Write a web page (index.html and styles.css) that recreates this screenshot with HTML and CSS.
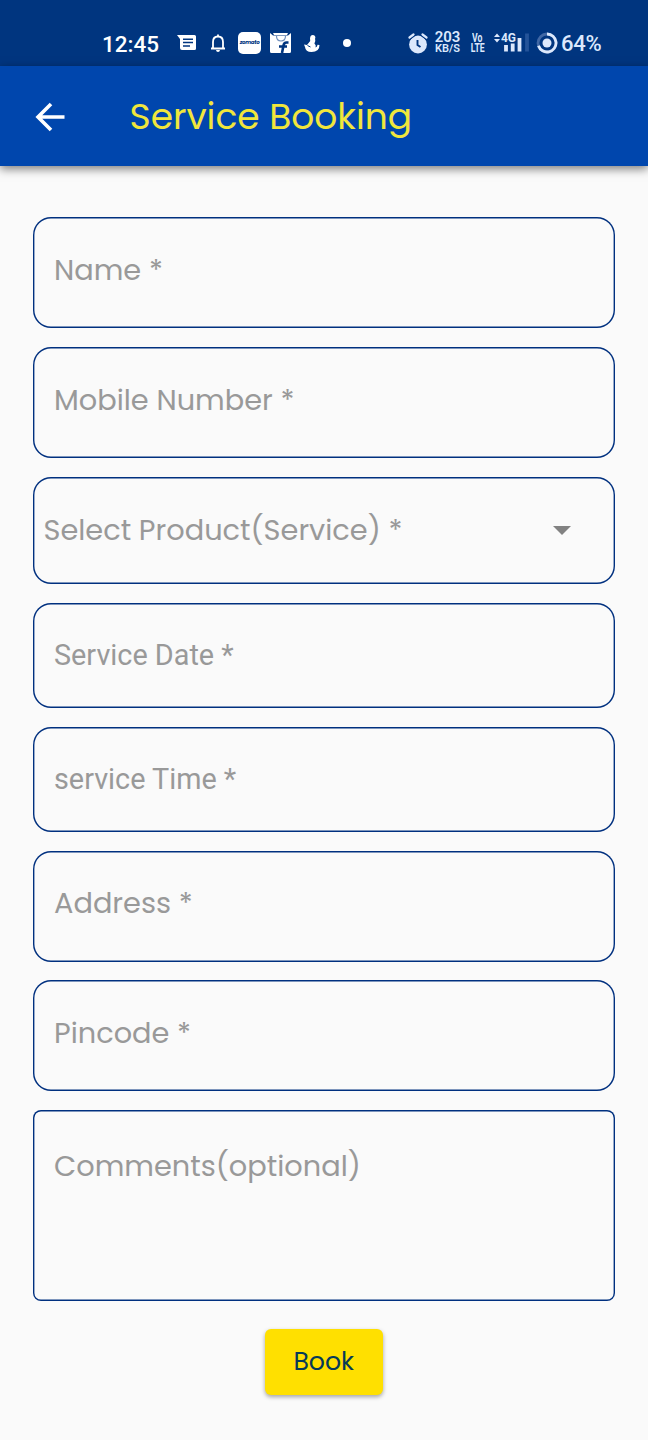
FILE: index.html
```html
<!DOCTYPE html>
<html lang="en">
<head>
    <meta charset="UTF-8">
    <meta name="viewport" content="width=device-width, initial-scale=1.0">
    <title>Service Booking</title>
    <link rel="stylesheet" href="styles.css">
</head>
<body>
    <div class="status-bar">
        <span class="time">12:45</span>
        <svg class="icon-message" width="19" height="18" viewBox="0 0 19 18">
            <path d="M0 1h17.500q1.500 0 1.500 1.500v12q0 1.500-1.500 1.500H5q-2 0-2-2V5z" fill="#fff"/>
            <path d="M6 5.200h10M6 8.600h10M6 12h7" stroke="#00357f" stroke-width="1.500"/>
        </svg>
        <svg class="icon-bell" width="16" height="20" viewBox="0 0 16 20">
            <path d="M1 15.500h14M3 15V9q0-5.500 5-5.500T13 9v6M8 3.500V1.500" fill="none" stroke="#fff" stroke-width="1.800"/>
            <path d="M6 17h4q-.3 2-2 2t-2-2z" fill="#fff"/>
        </svg>
        <span class="zomato">zomato</span>
        <svg class="icon-flipkart" width="21" height="22" viewBox="0 0 21 22">
            <path d="M0 1l3 2.500h15L21 1v18.500q0 1.500-1.500 1.500h-18Q0 21 0 19.500z" fill="#fff"/>
            <path d="M3 1h15l-1 2H4z" fill="#fff"/>
            <path d="M6.500 4q0 5 4.500 5t4.500-5" fill="none" stroke="#7190bd" stroke-width="1.200"/>
            <path d="M18.500 10.500h-2q-2.500 0-3 3L12 21M9 14.500h8" fill="none" stroke="#00357f" stroke-width="2.600"/>
        </svg>
        <svg class="icon-genie" width="16" height="19" viewBox="0 0 16 19">
            <circle cx="8.800" cy="3.400" r="2.500" fill="#fff"/>
            <path d="M6 3.500l5 1q1 3-.6 5 2 1.500 1.200 4 1.800-.5 1.900-2.800l2 .3Q15.500 18 7.500 18 1.500 18 1 13L0 10.500l3 .5 3.200-4z" fill="#fff"/>
            <path d="M3.500 11.500l3 1.500" stroke="#00357f" stroke-width="1"/>
        </svg>
        <span class="dot"></span>

        <svg class="icon-alarm" width="20" height="21" viewBox="0 0 20 21">
            <circle cx="10" cy="11.500" r="8.900" fill="#dce8fc"/>
            <path d="M1.500 4.500l4-3M18.500 4.500l-4-3" stroke="#dce8fc" stroke-width="2.200" stroke-linecap="round"/>
            <path d="M1.500 7l6-4.800M18.500 7l-6-4.800" stroke="#00357f" stroke-width="1"/>
            <path d="M9.500 7v5l3 2" fill="none" stroke="#00357f" stroke-width="1.900"/>
        </svg>
        <span class="speed"><b>203</b><small>KB/S</small></span>
        <span class="volte"><b>Vo</b><b>LTE</b></span>
        <svg class="icon-signal" width="37" height="22" viewBox="0 0 37 22">
            <path d="M0 5l3-3.500L6 5zM0 7l3 3.500L6 7z" fill="#dce8fc"/>
            <text x="7" y="10" class="network" textLength="15" lengthAdjust="spacingAndGlyphs">4G</text>
            <path d="M12 13v6.500M18.700 11.500v8M25.500 6v13.500" stroke="#dce8fc" stroke-width="3.800"/>
            <path d="M33 1.500v18" stroke="#24549a" stroke-width="3.800"/>
        </svg>
        <svg class="icon-battery" width="22" height="22" viewBox="0 0 22 22">
            <circle cx="11" cy="11" r="9" fill="none" stroke="#4168a5" stroke-width="2.800"/>
            <path d="M11 2a9 9 0 1 1-8.500 11.800" fill="none" stroke="#dce8fc" stroke-width="2.800"/>
            <circle cx="11" cy="11" r="4.500" fill="#dce8fc"/>
        </svg>
        <span class="percent">64%</span>
    </div>

    <header class="app-bar">
        <svg class="back" width="30" height="30" viewBox="0 0 30 30">
            <path d="M29.500 15H3M16 2L3 15l13 13" fill="none" stroke="#fff" stroke-width="3.600"/>
        </svg>
        <h1>Service Booking</h1>
    </header>

    <form class="booking-form">
        <div class="field"><label>Name *</label></div>
        <div class="field"><label>Mobile Number *</label></div>
        <div class="field select">
            <label>Select Product(Service) *</label>
            <svg width="18" height="9" viewBox="0 0 18 9"><path d="M0 0h18L9 9z" fill="#828282"/></svg>
        </div>
        <div class="field picker"><label>Service Date *</label></div>
        <div class="field picker"><label>service Time *</label></div>
        <div class="field"><label>Address *</label></div>
        <div class="field"><label>Pincode *</label></div>
        <div class="field comments"><label>Comments(optional)</label></div>
        <button type="button" class="btn-book">Book</button>
    </form>
</body>
</html>
```

FILE: styles.css
```css
* {
    margin: 0;
    padding: 0;
    box-sizing: border-box;
}

body {
    font-family: Poppins, Inter, sans-serif;
    background: #fafafa;
    min-height: 1440px;
}

.status-bar {
    height: 66px;
    padding: 20px 0 0 102px;
    display: flex;
    align-items: center;
    background: #00357f;
    color: #fff;
}

.status-bar svg,
.status-bar span {
    flex: none;
}

.time {
    width: 57px;
    padding-top: 1px;
    font-family: Roboto, sans-serif;
    font-size: 22.5px;
    font-weight: 500;
    white-space: nowrap;
}

.icon-message { margin-left: 18px; }
.icon-bell { margin-left: 14px; }

.zomato {
    width: 23px;
    height: 22px;
    margin-left: 12px;
    border-radius: 5px;
    background: #fff;
    color: #00357f;
    font-size: 5.5px;
    font-style: italic;
    font-weight: 700;
    line-height: 21px;
    text-align: center;
    letter-spacing: -0.3px;
}

.icon-flipkart { margin-left: 9px; }
.icon-genie { margin-left: 13px; }

.dot {
    width: 8px;
    height: 8px;
    margin-left: 23px;
    border-radius: 50%;
    background: #fff;
}

.icon-alarm { margin-left: 56.5px; }

.speed,
.volte {
    display: flex;
    flex-direction: column;
    align-items: center;
    color: #dce8fc;
    font-family: Roboto, sans-serif;
}

.speed {
    width: 28px;
    margin-left: 6px;
}

.speed b {
    font-size: 15px;
    font-weight: 600;
    line-height: 12px;
}

.speed small {
    font-size: 11px;
    font-weight: 600;
    line-height: 12px;
}

.volte {
    width: 14px;
    margin-left: 9px;
}

.volte b {
    font-size: 12px;
    line-height: 10px;
    transform: scaleX(0.72);
}

.icon-signal { margin-left: 9px; }

.network {
    font-family: Roboto, sans-serif;
    font-size: 13px;
    font-weight: 700;
    fill: #dce8fc;
}

.icon-battery { margin-left: 5.5px; }

.percent {
    margin-left: 3px;
    padding-top: 1px;
    color: #dce8fc;
    font-family: Roboto, sans-serif;
    font-size: 22px;
    font-weight: 500;
    letter-spacing: -0.2px;
}

.app-bar {
    height: 100px;
    padding-left: 35px;
    display: flex;
    align-items: center;
    background: #0046ad;
    box-shadow: 0 3px 9px rgba(0, 0, 0, 0.5);
}

.back {
    margin-top: 2px;
}

.app-bar h1 {
    margin-left: 64.5px;
    color: #f0e63c;
    font-size: 36px;
    font-weight: 400;
    white-space: nowrap;
}

.booking-form {
    padding: 51.4px 33px 0 32.5px;
    display: flex;
    flex-direction: column;
    gap: 18.7px;
}

.field {
    height: 111px;
    padding: 0 20.5px 5px 21.5px;
    display: flex;
    align-items: center;
    border-radius: 18px;
    box-shadow: inset 0 0 0 1.4px #00307f;
}

.field label {
    color: #999;
    font-size: 28.8px;
    font-weight: 400;
    white-space: nowrap;
}

.select {
    height: 107.3px;
    padding: 1px 44.5px 0 11px;
    justify-content: space-between;
}

.picker {
    height: 105.3px;
    padding-bottom: 1px;
}

.picker label {
    font-family: Roboto, sans-serif;
}

.comments {
    height: 190.5px;
    padding-top: 35px;
    align-items: flex-start;
    border-radius: 8px;
}

.btn-book {
    width: 118.5px;
    height: 65.5px;
    margin-top: 10px;
    align-self: center;
    border: none;
    border-radius: 6px;
    background: #ffe000;
    color: #063a58;
    font-family: Poppins, Inter, sans-serif;
    font-size: 25.2px;
    box-shadow: 0 2px 4px rgba(0, 0, 0, 0.35);
}
```
